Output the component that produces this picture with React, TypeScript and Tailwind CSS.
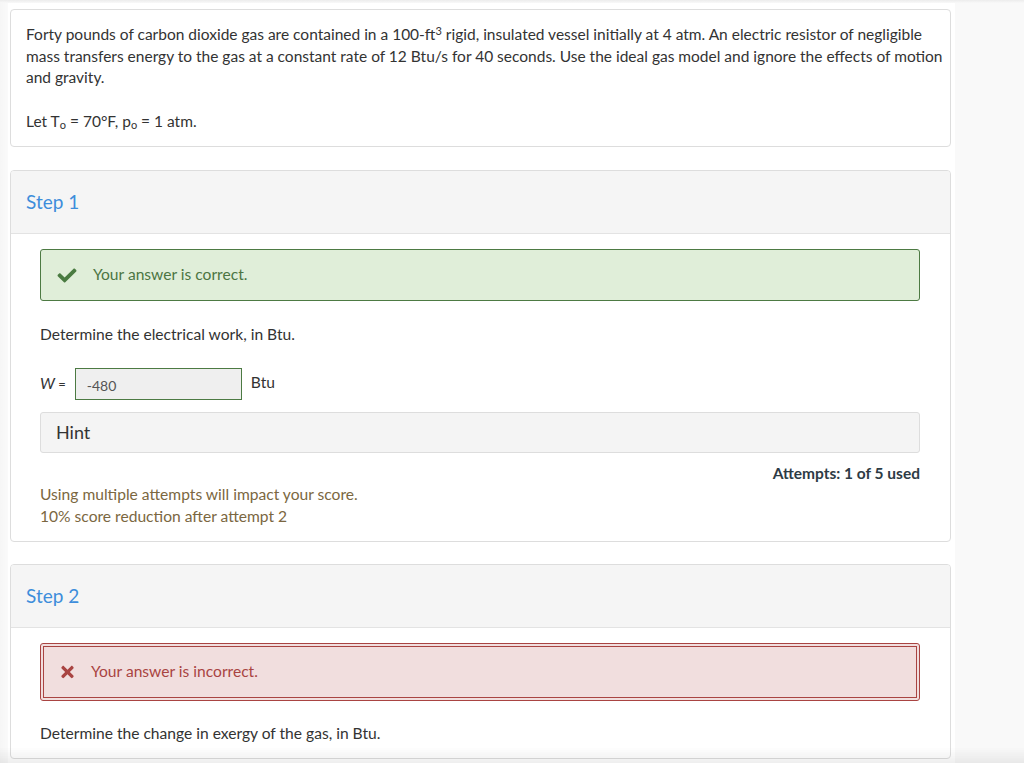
import React from "react";
import { FaCheck, FaTimes } from "react-icons/fa";

const font = { fontFamily: "Lato, 'Open Sans', sans-serif" };

function StepHeader({ label }: { label: string }) {
  return (
    <div className="flex h-[63px] items-center border-b border-[#e3e3e3] bg-[#f5f5f5] px-[15px] pt-[1px]">
      <span className="text-[19px] text-[#3d8ddb]">{label}</span>
    </div>
  );
}

export default function App() {
  return (
    <div className="relative min-h-screen bg-[#f9f9f9] text-[15.6px] text-[#333]" style={font}>
      {/* top shadow strip */}
      <div className="h-[3px] bg-gradient-to-b from-[#ececec] to-[#f9f9f9]" />

      <div className="flex">
        <div className="w-[8px] bg-gradient-to-r from-[#f6f6f6] to-[#fafafa]" />
        <main className="w-[947px] bg-white pl-[2px] pr-[4px] pt-[6px] pb-[30px]">
          {/* QUESTION */}
          <div className="rounded-[4px] border border-[#ddd] pl-[15px] pr-[6px] pt-[14px] pb-[14px] text-[15.5px] leading-[21.5px]">
            <p>
              Forty pounds of carbon dioxide gas are contained in a 100-ft
              <sup className="text-[11px] leading-none">3</sup> rigid, insulated vessel initially at 4 atm. An
              electric resistor of negligible mass transfers energy to the gas at a constant rate of 12 Btu/s
              for 40 seconds. Use the ideal gas model and ignore the effects of motion and gravity.
            </p>
            <p className="mt-[22px]">
              Let T<sub className="text-[11px] leading-none">o</sub> = 70°F, p
              <sub className="text-[11px] leading-none">o</sub> = 1 atm.
            </p>
          </div>

          {/* STEP 1 */}
          <div className="mt-[23px] overflow-hidden rounded-[4px] border border-[#ddd]">
            <StepHeader label="Step 1" />
            <div className="pl-[29px] pr-[30px] pt-[15px] pb-[14px]">
              <div className="flex h-[52px] items-center rounded-[3px] border border-[#4d7a43] bg-[#e0eed9] pl-[16px] text-[#4c7543]">
                <FaCheck className="h-[19px] w-[20px] text-[#4a7b41]" />
                <span className="ml-[16px]">Your answer is correct.</span>
              </div>

              <p className="mt-[23px] leading-[21px]">Determine the electrical work, in Btu.</p>

              <div className="mt-[23px] flex items-center">
                <span>
                  <i>W</i>
                  <span className="text-[13px]"> =</span>
                </span>
                <div className="ml-[9px] flex h-[32px] w-[167px] items-center border border-[#4c7a43] bg-[#efefef] px-[11px] pt-[2px] text-[14px] text-[#555]">
                  -480
                </div>
                <span className="ml-[9px] -mt-[3px]">Btu</span>
              </div>

              <div className="mt-[12px] flex h-[41px] items-center rounded-[3px] border border-[#ddd] bg-[#f4f4f4] pl-[15px] text-[18px]">
                Hint
              </div>

              <div className="mt-[9px] text-right text-[15.5px] font-bold leading-[22px] text-[#2d3b45]">
                Attempts: 1 of 5 used
              </div>

              <div className="mt-0 text-[15.6px] leading-[21.5px] text-[#7b6741]">
                <p>Using multiple attempts will impact your score.</p>
                <p>10% score reduction after attempt 2</p>
              </div>
            </div>
          </div>

          {/* STEP 2 */}
          <div className="mt-[22px] overflow-hidden rounded-[4px] border border-[#ddd]">
            <StepHeader label="Step 2" />
            <div className="pl-[29px] pr-[30px] pt-[15px] pb-[14px]">
              <div className="flex h-[58px] items-center rounded-[3px] border-[4px] border-double border-[#a94442] bg-[#f1dede] pl-[16px] text-[#a94442]">
                <FaTimes className="h-[18px] w-[15px] text-[#a94442]" />
                <span className="ml-[16px]">Your answer is incorrect.</span>
              </div>

              <p className="mt-[22px] leading-[21px]">Determine the change in exergy of the gas, in Btu.</p>
            </div>
          </div>
        </main>
      </div>

      {/* bottom fade overlay */}
      <div className="pointer-events-none fixed bottom-0 left-0 right-0 h-[16px] bg-gradient-to-b from-transparent to-[#00000010]" />
    </div>
  );
}
